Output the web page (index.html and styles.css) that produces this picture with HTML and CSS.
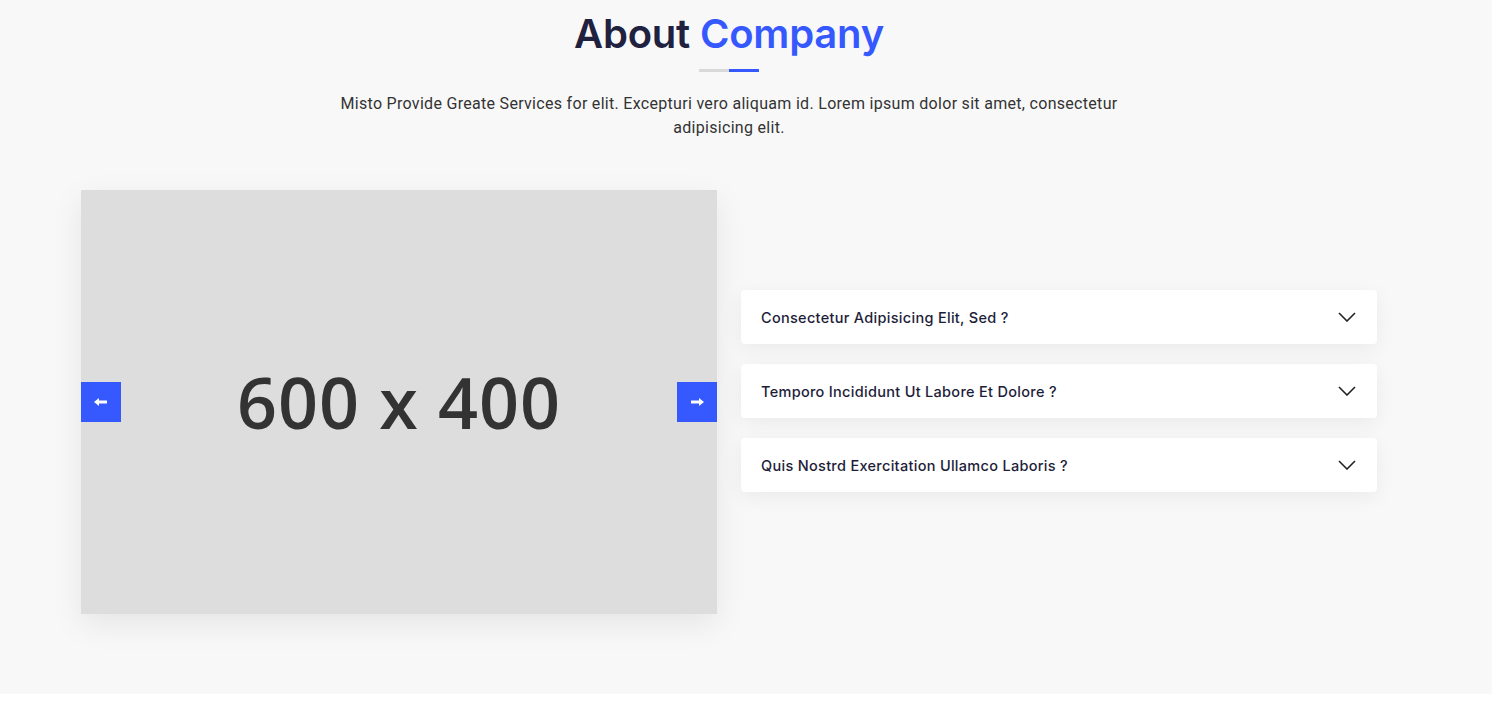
FILE: index.html
```html
<!DOCTYPE html>
<html>
<head>
<meta charset="utf-8">
<link rel="stylesheet" href="styles.css">
</head>
<body>
<section class="about">
  <div class="wrap">
    <div class="head">
      <h2 class="title">About <span class="accent">Company</span></h2>
      <div class="bar"><span class="bar-gray"></span><span class="bar-blue"></span></div>
      <p class="lead">Misto Provide Greate Services for elit. Excepturi vero aliquam id. Lorem ipsum dolor sit amet, consectetur adipisicing elit.</p>
    </div>
    <div class="row">
      <div class="slider">
        <div class="placeholder">600 x 400</div>
        <button class="nav nav-prev" aria-label="prev">
          <svg width="14" height="10" viewBox="0 0 14 10"><path d="M0 5 L5 1 L5 3.6 L13 3.6 L13 6.4 L5 6.4 L5 9 Z" fill="#fff"/></svg>
        </button>
        <button class="nav nav-next" aria-label="next">
          <svg width="14" height="10" viewBox="0 0 14 10"><path d="M14 5 L9 1 L9 3.6 L1 3.6 L1 6.4 L9 6.4 L9 9 Z" fill="#fff"/></svg>
        </button>
      </div>
      <div class="faq">
        <div class="item"><span class="q">Consectetur Adipisicing Elit, Sed ?</span><svg class="chev" width="18" height="10" viewBox="0 0 18 10"><path d="M1 1 L9 9 L17 1" fill="none" stroke="#222" stroke-width="1.6"/></svg></div>
        <div class="item"><span class="q">Temporo Incididunt Ut Labore Et Dolore ?</span><svg class="chev" width="18" height="10" viewBox="0 0 18 10"><path d="M1 1 L9 9 L17 1" fill="none" stroke="#222" stroke-width="1.6"/></svg></div>
        <div class="item"><span class="q">Quis Nostrd Exercitation Ullamco Laboris ?</span><svg class="chev" width="18" height="10" viewBox="0 0 18 10"><path d="M1 1 L9 9 L17 1" fill="none" stroke="#222" stroke-width="1.6"/></svg></div>
      </div>
    </div>
  </div>
</section>
</body>
</html>
```
FILE: styles.css
```css
* { box-sizing: border-box; }
html, body { margin: 0; padding: 0; background: #fff; }
body { font-family: "Open Sans", "Liberation Sans", sans-serif; }
.about { background: #f8f8f8; height: 694px; }
.wrap { width: 1296px; margin-left: 81px; }
.head { text-align: center; padding-top: 8px; }
.title {
  margin: 0;
  font-family: Inter, "Liberation Sans", sans-serif;
  font-size: 40px;
  font-weight: 600;
  line-height: 52px;
  color: #20203f;
  letter-spacing: -0.2px;
}
.accent { color: #3558ff; }
.bar { display: flex; justify-content: center; margin-top: 9px; height: 3px; }
.bar-gray { width: 30px; background: #d9d9d9; }
.bar-blue { width: 30px; background: #3558ff; }
.lead {
  width: 790px;
  margin: 20px auto 0;
  font-family: Roboto, "Liberation Sans", sans-serif;
  font-size: 16px;
  letter-spacing: 0.3px;
  line-height: 24px;
  color: #333;
}
.row { display: flex; gap: 24px; align-items: center; margin-top: 50px; }
.slider {
  position: relative;
  width: 636px;
  height: 424px;
  flex: none;
  background: #dddddd;
  box-shadow: 0 10px 30px rgba(0,0,0,0.08);
  display: flex;
  align-items: center;
  justify-content: center;
}
.placeholder {
  font-family: "Open Sans", "Noto Sans", sans-serif;
  font-size: 70px;
  font-weight: 600;
  color: #333;
  letter-spacing: 1px;
}
.nav {
  position: absolute;
  top: 192px;
  width: 40px;
  height: 40px;
  border: 0;
  padding: 0;
  background: #3558ff;
  display: flex;
  align-items: center;
  justify-content: center;
}
.nav-prev { left: 0; }
.nav-next { right: 0; }
.faq { flex: 1; display: flex; flex-direction: column; padding-bottom: 2px; }
.item {
  height: 54px;
  margin-bottom: 20px;
  background: #fff;
  border-radius: 4px;
  box-shadow: 0 5px 20px rgba(0,0,0,0.06);
  display: flex;
  align-items: center;
  justify-content: space-between;
  padding: 0 21px 0 20px;
}
.q {
  font-family: Inter, "Liberation Sans", sans-serif;
  font-size: 14.5px;
  letter-spacing: 0.3px;
  font-weight: 500;
  color: #1d1d3a;
}
.chev { display: block; }
```
